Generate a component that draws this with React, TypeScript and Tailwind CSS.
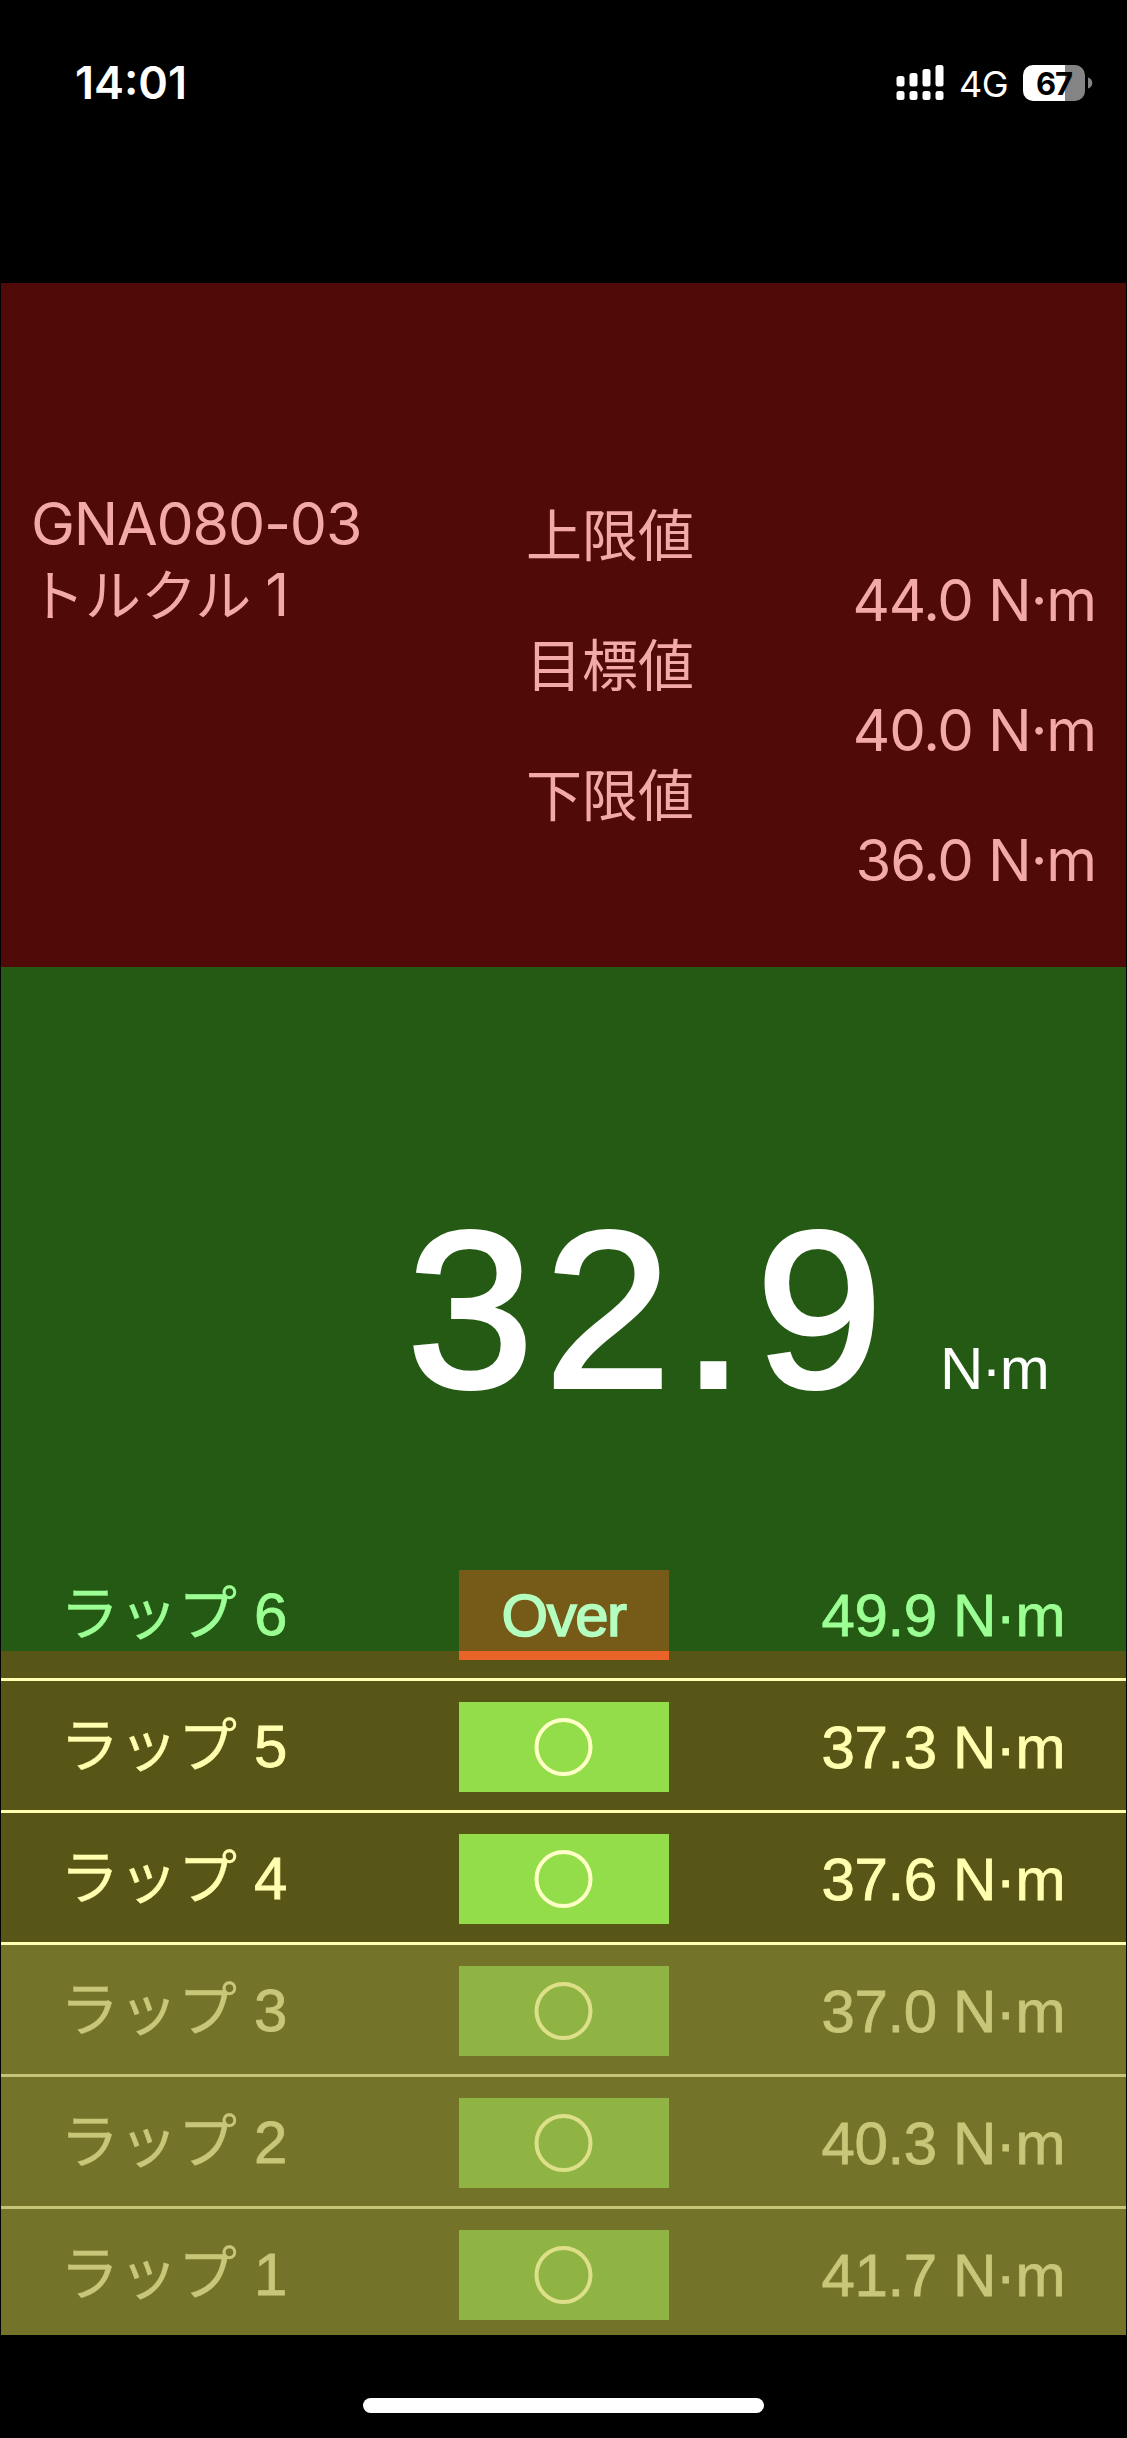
import clsx from 'clsx'

type Lap = { no: number; value: string; over?: boolean; dim?: boolean }

const limits = [
  { label: '上限値', value: '44.0' },
  { label: '目標値', value: '40.0' },
  { label: '下限値', value: '36.0' },
]

const laps: Lap[] = [
  { no: 6, value: '49.9', over: true },
  { no: 5, value: '37.3' },
  { no: 4, value: '37.6' },
  { no: 3, value: '37.0', dim: true },
  { no: 2, value: '40.3', dim: true },
  { no: 1, value: '41.7', dim: true },
]

function StatusBar() {
  return (
    <header className="flex h-[283px] items-start justify-between pl-[75px] pr-[34px] pt-[65px] font-['Inter','Noto_Sans_CJK_JP',sans-serif] text-white">
      <span className="text-[45px] font-semibold leading-[36px]">14:01</span>
      <div className="flex h-[36px] items-center">
        <svg width="48" height="36" viewBox="0 0 48 36" fill="currentColor">
          <rect x="0.5" y="11" width="8" height="10.5" rx="2.5" />
          <rect x="13.5" y="8" width="8" height="13.5" rx="2.5" />
          <rect x="26.5" y="4" width="8" height="17.5" rx="2.5" />
          <rect x="39.5" y="0" width="8" height="21.5" rx="2.5" />
          <rect x="0.5" y="26" width="8" height="9" rx="2.5" />
          <rect x="13.5" y="26" width="8" height="9" rx="2.5" />
          <rect x="26.5" y="26" width="8" height="9" rx="2.5" />
          <rect x="39.5" y="26" width="8" height="9" rx="2.5" />
        </svg>
        <span className="ml-[15px] w-[64px] pt-[2px] text-[36px] leading-[36px] tracking-[-0.5px]">4G</span>
        <div className="flex h-[36px] w-[62px] items-center justify-center rounded-[10px] bg-linear-to-r from-white from-[68%] to-[#848484] to-[68%] text-[31px] font-bold leading-none tracking-[-1px] text-black">
          67
        </div>
        <svg width="5" height="12" viewBox="0 0 5 12" className="ml-[3px]">
          <path d="M0 0.5C2.6 1.3 4.3 3.3 4.3 6S2.6 10.7 0 11.5Z" fill="#848484" />
        </svg>
      </div>
    </header>
  )
}

function TargetPanel() {
  return (
    <section className="flex h-[684px] bg-[#500a08] pl-[30px] pr-[30px] pt-[206px] font-['Inter','Noto_Sans_CJK_JP',sans-serif] text-[#f3aaa7]">
      <div className="w-[495px] text-[59px] leading-[70px]">
        <p className="tracking-[-1.2px]">GNA080-03</p>
        <p className="-ml-[2px] pt-px text-[56px]">
          トルクル<span className="ml-[14px] text-[59px]">1</span>
        </p>
      </div>
      <div className="flex-1">
        {limits.map((l) => (
          <div key={l.label} className="h-[130px]">
            <p className="h-[80px] text-[56px] leading-[94px]">{l.label}</p>
            <p className="text-right text-[58px] leading-[62px] tracking-[-1.1px]">{l.value} N·m</p>
          </div>
        ))}
      </div>
    </section>
  )
}

function Reading() {
  return (
    <section className="flex h-[684px] items-baseline justify-end bg-[#245a14] pr-[78px] pt-[213px] text-white">
      <span className="origin-left scale-x-[1.025] text-[222px] leading-[260px] tracking-[10.6px] [-webkit-text-stroke:4px_white]">
        32.9
      </span>
      <span className="ml-[59px] translate-y-[2px] text-[60px] tracking-[-1.8px]">N·m</span>
    </section>
  )
}

function LapRow({ lap }: { lap: Lap }) {
  return (
    <li
      className={clsx(
        'grid h-[132px] grid-cols-[1fr_210px_1fr] px-[61px] pt-[21px] text-[60px] leading-[92px]',
        lap.no !== 1 && 'border-b-[3px]',
        lap.over && 'border-[#ffffaf] text-[#9cff94]',
        !lap.over && !lap.dim && 'border-[#ffffaf] text-[#ffffaf]',
        lap.dim && 'border-[#c6c477] bg-[#737329] text-[#c8c678]',
      )}
    >
      <span className="-ml-[2px] -mt-px [-webkit-text-stroke:0.3px]">
        <span className="text-[59px]">ラップ</span>
        <span className="ml-[17px] [-webkit-text-stroke:0.8px]">{lap.no}</span>
      </span>
      {lap.over ? (
        <span className="h-[90px] border-b-[9px] border-[#e96428] bg-[#765a18] text-center tracking-[-1.5px] text-[#b4ffc0] [-webkit-text-stroke:1.6px_#b4ffc0]">
          Over
        </span>
      ) : (
        <span
          className={clsx(
            'h-[90px] text-center leading-[95px] [-webkit-text-stroke:2px]',
            lap.dim ? 'bg-[#8fb444] text-[#dde088]' : 'bg-[#94dd4a] text-[#ffffc8]',
          )}
        >
          ◯
        </span>
      )}
      <span className="text-right tracking-[-0.4px] [-webkit-text-stroke:0.8px]">{lap.value} N·m</span>
    </li>
  )
}

export default function App() {
  return (
    <div className="h-[2438px] w-[1127px] overflow-hidden bg-black font-['Liberation_Sans','Noto_Sans_CJK_JP',sans-serif]">
      <StatusBar />
      <main className="mx-px h-[2052px] overflow-hidden">
        <TargetPanel />
        <Reading />
        <div className="h-[684px] bg-[#585617]">
          {/* the newest lap straddles the reading panel */}
          <ul className="relative -top-[102px]">
            {laps.map((lap) => (
              <LapRow key={lap.no} lap={lap} />
            ))}
          </ul>
        </div>
      </main>
      <div className="mx-auto mt-[63px] h-[15px] w-[401px] rounded-full bg-white" />
    </div>
  )
}
